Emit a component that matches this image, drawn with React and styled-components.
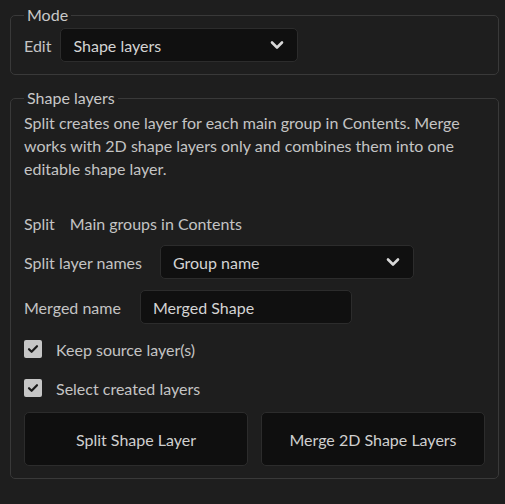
import React from 'react';
import styled, { createGlobalStyle } from 'styled-components';

const Global = createGlobalStyle`
  html, body {
    margin: 0;
    background: #1e1e1e;
  }
  body {
    padding: 5px 7px 0 10px;
    font-family: Lato, "Open Sans", sans-serif;
    font-size: 16px;
    color: #c8c8c8;
  }
`;

const Chevron = () => (
  <svg width="14" height="10" viewBox="0 0 14 10">
    <path d="M2 2.5 L7 7.5 L12 2.5" fill="none" stroke="#d8d8d8" strokeWidth="2.6" strokeLinecap="round" strokeLinejoin="round" />
  </svg>
);

const Check = () => (
  <svg width="12" height="10" viewBox="0 0 12 10">
    <path d="M2 5.2 L4.6 7.8 L10 2.2" fill="none" stroke="#1a1a1a" strokeWidth="2.2" strokeLinecap="round" strokeLinejoin="round" />
  </svg>
);

const App = () => {
  return (
    <>
      <Global />
      <Panel>
        <Group>
          <Legend>Mode</Legend>
          <Row $gap={9} $top={3}>
            <Label>Edit</Label>
            <Select $width={238}>
              <span>Shape layers</span>
              <Chevron />
            </Select>
          </Row>
        </Group>

        <Group $spaced>
          <Legend>Shape layers</Legend>
          <Description>
            Split creates one layer for each main group in Contents. Merge works with 2D shape layers only and combines them into one editable shape layer.
          </Description>
          <Row $gap={15} $top={32}>
            <Label>Split</Label>
            <Label>Main groups in Contents</Label>
          </Row>
          <Row $gap={18} $top={10}>
            <Label>Split layer names</Label>
            <Select $width={254}>
              <span>Group name</span>
              <Chevron />
            </Select>
          </Row>
          <Row $gap={19} $top={11}>
            <Label>Merged name</Label>
            <TextInput defaultValue="Merged Shape" />
          </Row>
          <CheckRow $top={11}>
            <Box><Check /></Box>
            <Label>Keep source layer(s)</Label>
          </CheckRow>
          <CheckRow $top={11}>
            <Box><Check /></Box>
            <Label>Select created layers</Label>
          </CheckRow>
          <Buttons>
            <Button>Split Shape Layer</Button>
            <Button>Merge 2D Shape Layers</Button>
          </Buttons>
        </Group>
      </Panel>
    </>
  );
};

const Panel = styled.div`
  width: 489px;
  display: flex;
  flex-direction: column;
`;

const Group = styled.fieldset`
  margin: ${p => (p.$spaced ? '13px' : '0')} 0 0 0;
  padding: 0 13px 12px 13px;
  border: 1px solid #393939;
  border-radius: 5px;
  min-width: 0;
`;

const Legend = styled.legend`
  padding: 0 3px;
  font-size: 16px;
  line-height: 20px;
  color: #c8c8c8;
`;

const Row = styled.div`
  display: flex;
  align-items: center;
  gap: ${p => p.$gap}px;
  margin-top: ${p => p.$top}px;
  line-height: 23px;
`;

const Label = styled.span`
  color: #c4c4c4;
  white-space: nowrap;
`;

const Select = styled.div`
  box-sizing: border-box;
  width: ${p => p.$width}px;
  height: 34px;
  display: flex;
  align-items: center;
  justify-content: space-between;
  padding: 0 13px 0 12px;
  background: #101010;
  border: 1px solid #2c2c2c;
  border-radius: 5px;
  color: #d4d4d4;
`;

const TextInput = styled.input`
  box-sizing: border-box;
  width: 212px;
  height: 34px;
  padding: 0 12px;
  background: #101010;
  border: 1px solid #2c2c2c;
  border-radius: 5px;
  color: #d4d4d4;
  font: inherit;
  outline: none;
`;

const Description = styled.p`
  margin: 3px 0 0 0;
  line-height: 23px;
  color: #c4c4c4;
`;

const CheckRow = styled.label`
  display: flex;
  align-items: center;
  gap: 14px;
  height: 28px;
  margin-top: ${p => p.$top}px;
`;

const Box = styled.span`
  width: 18px;
  height: 18px;
  border-radius: 2px;
  background: #c6c6c6;
  display: flex;
  align-items: center;
  justify-content: center;
`;

const Buttons = styled.div`
  display: grid;
  grid-template-columns: 1fr 1fr;
  gap: 13px;
  margin-top: 10px;
`;

const Button = styled.button`
  height: 54px;
  background: #0f0f0f;
  border: 1px solid #2c2c2c;
  border-radius: 5px;
  color: #cfcfcf;
  font: inherit;
  cursor: pointer;
`;

export default App;
